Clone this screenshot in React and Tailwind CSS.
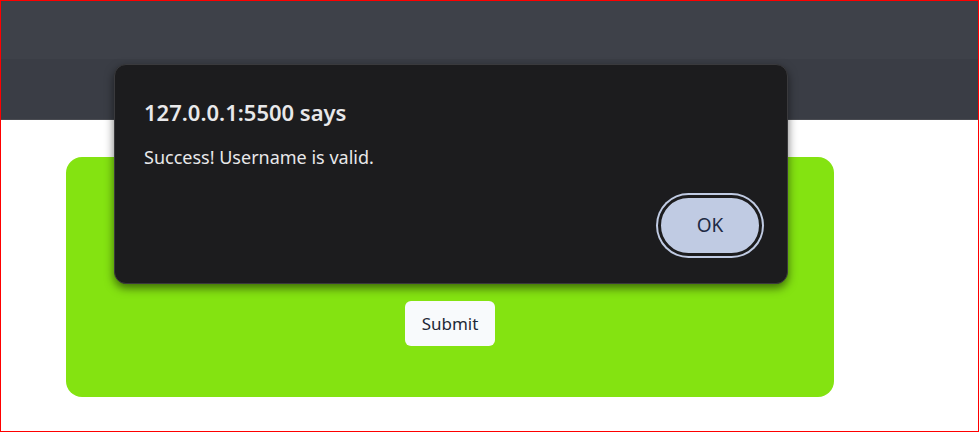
export default function App() {
  return (
    <div className="relative h-[432px] w-full overflow-hidden border border-[#ff0000] bg-white font-['Noto_Sans',sans-serif]">
      {/* dimmed header band */}
      <div className="flex h-[119px] flex-col">
        <div className="h-[58px] bg-[#3e4149]" />
        <div className="flex-1 bg-[#3a3d45]" />
        <div className="h-px bg-[#4a4c52]" />
      </div>

      {/* page card */}
      <div className="ml-[65px] mt-[37px] flex h-[240px] w-[768px] flex-col items-center justify-end rounded-2xl bg-[#84e311] pb-[51px]">
        <button className="flex h-[45px] w-[90px] items-center justify-center rounded-md bg-[#f8fafc] text-[17px] text-[#1f2937]">
          Submit
        </button>
      </div>

      {/* alert dialog */}
      <div className="absolute left-[113px] top-[63px] flex h-[220px] w-[674px] flex-col rounded-xl border border-[#3a3a3d] bg-[#1c1c1e] pl-[29px] pr-[30px] pt-[32px] shadow-[0_4px_10px_rgba(0,0,0,0.55)]">
        <h1 className="text-[22px] font-semibold leading-[30px] text-[#e8e8ea]">127.0.0.1:5500 says</h1>
        <p className="mt-[18px] text-[18px] leading-[24px] text-[#e8e8ea]">Success! Username is valid.</p>
        <div className="mt-auto mb-[27px] -mr-[5px] flex justify-end">
          <button className="flex h-[61px] w-[104px] items-center justify-center rounded-full border-[3px] border-[#1c1c1e] bg-[#c0cbe3] text-[19px] text-[#1e2a44] shadow-[0_0_0_2px_#c0cbe3]">
            OK
          </button>
        </div>
      </div>
    </div>
  );
}
